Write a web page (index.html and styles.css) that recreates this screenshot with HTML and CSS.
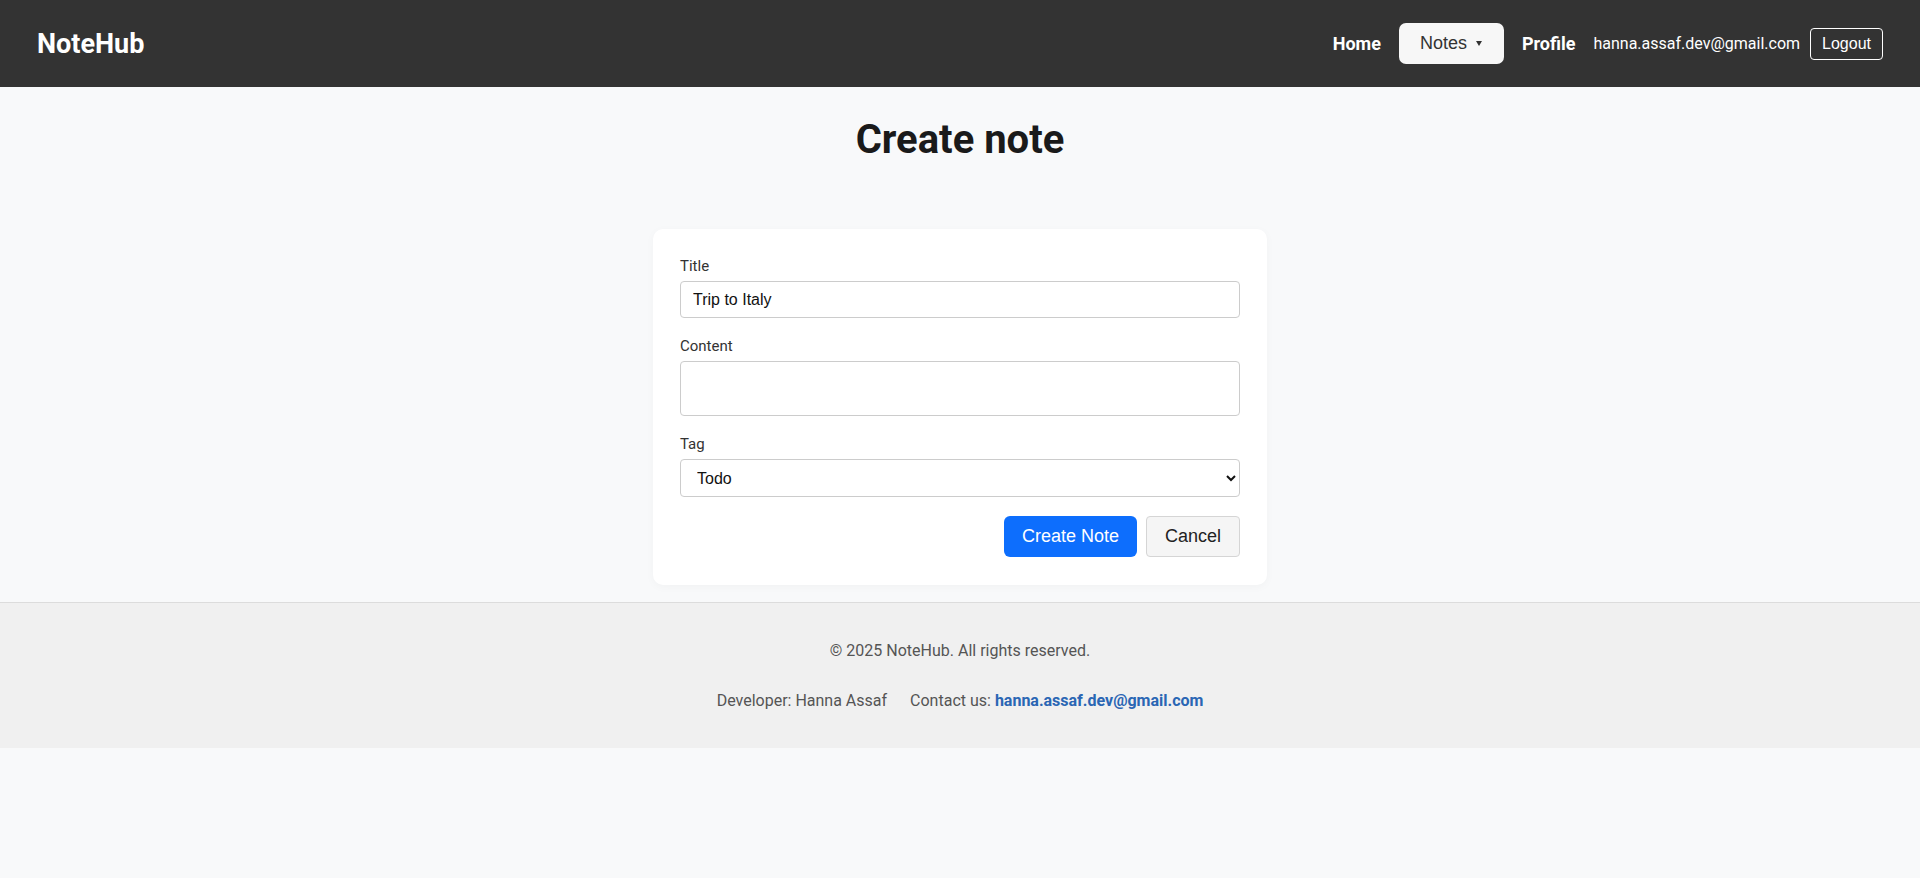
FILE: index.html
```html
<!DOCTYPE html>
<html lang="en">
<head>
    <meta charset="UTF-8">
    <meta name="viewport" content="width=device-width, initial-scale=1.0">
    <title>NoteHub - Create note</title>
    <link rel="stylesheet" href="styles.css">
</head>
<body>
    <header class="header">
        <a href="#" class="logo">NoteHub</a>
        <nav>
            <ul class="nav-list">
                <li><a href="#" class="nav-link">Home</a></li>
                <li>
                    <button class="notes-btn">Notes <span class="caret"></span></button>
                </li>
                <li><a href="#" class="nav-link">Profile</a></li>
                <li class="user-box">
                    <span class="user-email">hanna.assaf.dev@gmail.com</span>
                    <button class="logout-btn">Logout</button>
                </li>
            </ul>
        </nav>
    </header>

    <main class="main">
        <h1 class="page-title">Create note</h1>
        <form class="note-form" onsubmit="return false;">
            <div class="form-group">
                <label for="title">Title</label>
                <input type="text" id="title" value="Trip to Italy">
            </div>
            <div class="form-group">
                <label for="content">Content</label>
                <textarea id="content"></textarea>
            </div>
            <div class="form-group">
                <label for="tag">Tag</label>
                <select id="tag">
                    <option>Todo</option>
                    <option>Work</option>
                    <option>Personal</option>
                    <option>Meeting</option>
                    <option>Shopping</option>
                </select>
            </div>
            <div class="actions">
                <button type="submit" class="btn-primary">Create Note</button>
                <button type="button" class="btn-cancel">Cancel</button>
            </div>
        </form>
    </main>

    <footer class="footer">
        <p class="copyright">&copy; 2025 NoteHub. All rights reserved.</p>
        <div class="footer-info">
            <span>Developer: Hanna Assaf</span>
            <span>Contact us: <a href="mailto:hanna.assaf.dev@gmail.com">hanna.assaf.dev@gmail.com</a></span>
        </div>
    </footer>
</body>
</html>
```

FILE: styles.css
```css
body {
    margin: 0;
    font-family: Roboto, "Liberation Sans", Arial, sans-serif;
    background-color: #f8f9fa;
    color: #222;
}
.header {
    height: 87px;
    background-color: #333;
    display: flex;
    align-items: center;
    justify-content: space-between;
    padding: 0 37px;
    box-sizing: border-box;
}
.logo {
    color: #fff;
    font-size: 27px;
    font-weight: 700;
    text-decoration: none;
}
.nav-list {
    list-style: none;
    margin: 0;
    padding: 0;
    display: flex;
    align-items: center;
    gap: 18px;
}
.nav-link {
    color: #fff;
    font-size: 18px;
    font-weight: 700;
    text-decoration: none;
}
.notes-btn {
    height: 41px;
    padding: 0 22px 0 21px;
    background-color: #f7f7f7;
    color: #333;
    border: none;
    border-radius: 7px;
    font-family: "Liberation Sans", Arial, sans-serif;
    font-size: 18px;
    display: flex;
    align-items: center;
    cursor: pointer;
}
.caret {
    display: inline-block;
    margin-left: 9px;
    border-left: 3.5px solid transparent;
    border-right: 3.5px solid transparent;
    border-top: 5px solid #333;
}
.user-box {
    display: flex;
    align-items: center;
    gap: 10px;
}
.user-email {
    color: #fff;
    font-size: 16px;
}
.logout-btn {
    height: 32px;
    padding: 0 11px;
    background: transparent;
    color: #fff;
    border: 1px solid #fff;
    border-radius: 4px;
    font-family: "Liberation Sans", Arial, sans-serif;
    font-size: 16px;
    cursor: pointer;
}
.main {
    padding: 29px 0 17px;
}
.page-title {
    margin: 0 0 66px;
    text-align: center;
    font-size: 40px;
    font-weight: 700;
    color: #1a1a1a;
}
.note-form {
    width: 614px;
    margin: 0 auto;
    padding: 28px 27px;
    box-sizing: border-box;
    background-color: #fff;
    border-radius: 10px;
    box-shadow: 0 2px 10px rgba(0, 0, 0, 0.03);
}
.form-group {
    margin-bottom: 19px;
}
.form-group label {
    display: block;
    margin-bottom: 6px;
    font-size: 15px;
    line-height: 18px;
    color: #333;
}
.form-group input,
.form-group textarea,
.form-group select {
    width: 100%;
    box-sizing: border-box;
    border: 1px solid #ccc;
    border-radius: 4px;
    padding: 8px 12px;
    font-family: "Liberation Sans", Arial, sans-serif;
    font-size: 16px;
    color: #111;
    background-color: #fff;
}
.form-group input {
    height: 37px;
}
.form-group textarea {
    height: 55px;
    resize: none;
    display: block;
}
.form-group select {
    height: 38px;
}
.actions {
    display: flex;
    justify-content: flex-end;
    gap: 9px;
}
.actions button {
    height: 41px;
    padding: 0 18px;
    font-family: "Liberation Sans", Arial, sans-serif;
    font-size: 18px;
    cursor: pointer;
}
.btn-primary {
    background-color: #0d6efd;
    color: #fff;
    border: none;
    border-radius: 6px;
}
.btn-primary:hover {
    background-color: #0b5ed7;
}
.btn-cancel {
    background-color: #f5f5f5;
    color: #222;
    border: 1px solid #d5d5d5;
    border-radius: 4px;
}
.footer {
    background-color: #f0f0f0;
    border-top: 1px solid #dcdcdc;
    padding: 38px 0;
    text-align: center;
    color: #555;
    font-size: 16px;
}
.copyright {
    margin: 0 0 31px;
}
.footer-info {
    display: flex;
    justify-content: center;
    gap: 23px;
}
.footer-info a {
    color: #2a66b4;
    font-weight: 700;
    text-decoration: none;
}
```
